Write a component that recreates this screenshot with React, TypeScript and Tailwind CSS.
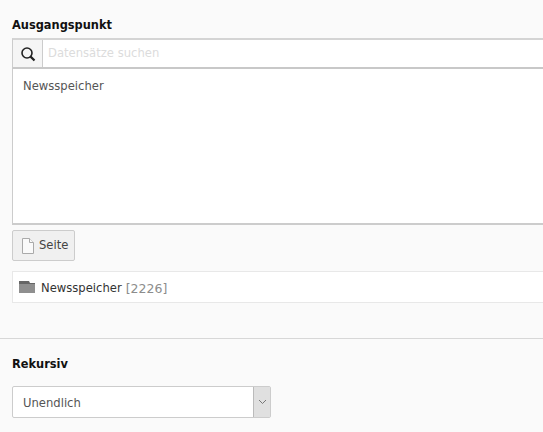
const font = "font-['DejaVu_Sans',sans-serif]"

export default function App() {
  return (
    <div className={`${font} w-[543px] h-[432px] overflow-hidden bg-[#fafafa] text-[11.6px] text-[#333]`}>
      <div className="pl-3 pt-[17px]">
        <div className="h-[16px] leading-[16px] font-bold text-[11.4px] text-[#111]">Ausgangspunkt</div>
        <div className="mt-[5px] h-[31px] flex bg-white border-t-2 border-b-2 border-l border-[#ccc] border-t-[#d4d4d4] border-b-[#c8c8c8]">
          <div className="w-[30px] flex items-center justify-center bg-[#f5f5f5] border-r border-[#ccc]">
            <svg width="16" height="16" viewBox="0 0 16 16" fill="none" stroke="#222" strokeWidth="1.6">
              <circle cx="7" cy="7" r="5" />
              <path d="M10.6 10.6 L14.5 14.5" strokeWidth="2.2" />
            </svg>
          </div>
          <div className="pl-[5px] pt-[1px] flex items-center text-[#dcdcdc]">Datensätze suchen</div>
        </div>
        <div className="h-[156px] bg-white border-l border-b-2 border-[#ccc] pl-[10px] pt-[9px] leading-[16px] text-[#555]">Newsspeicher</div>
        <div className="mt-[5px] w-[63px] h-[31px] flex items-center gap-[4px] pl-[8px] bg-[#f0f0f0] border border-[#ccc] rounded-[2px]">
          <svg width="14" height="16" viewBox="0 0 14 16" fill="#fafafa" stroke="#aaa">
            <path d="M1.5 .5 H8.5 L12.5 4.5 V15.5 H1.5 Z" />
            <path d="M8.5 .5 V4.5 H12.5" />
          </svg>
          <span className="text-[#444]">Seite</span>
        </div>
        <div className="mt-[10px] h-[32px] flex items-center pl-[6px] pt-[4px] bg-white border border-r-0 border-[#e8e8e8]">
          <svg width="16" height="12" viewBox="0 0 16 12" className="mr-[6px] -mt-[4px]">
            <path d="M0 2 H16 V12 H0 Z" fill="#8f8f8f" />
            <path d="M0 0 H10 L11 2 H16 V3 H0 Z" fill="#666" />
          </svg>
          <span className="text-[#333]">Newsspeicher</span>
          <span className="ml-[4px] text-[12.5px] text-[#8c8c8c]">[2226]</span>
        </div>
      </div>
      <div className="mt-[35px] border-t border-[#d7d7d7] pl-3 pt-[17px]">
        <div className="h-[16px] leading-[16px] font-bold text-[11.4px] text-[#111]">Rekursiv</div>
        <div className="mt-[14px] w-[259px] h-[32px] flex bg-white border border-[#ccc] rounded-[2px]">
          <div className="flex-1 flex items-center pl-[10px] pt-[4px] text-[#555]">Unendlich</div>
          <div className="w-[17px] flex items-center justify-center bg-[#e0e0e0] border-l border-[#bbb]">
            <svg width="9" height="6" viewBox="0 0 9 6" fill="none" stroke="#777">
              <path d="M1 1 L4.5 4.5 L8 1" />
            </svg>
          </div>
        </div>
      </div>
    </div>
  )
}
